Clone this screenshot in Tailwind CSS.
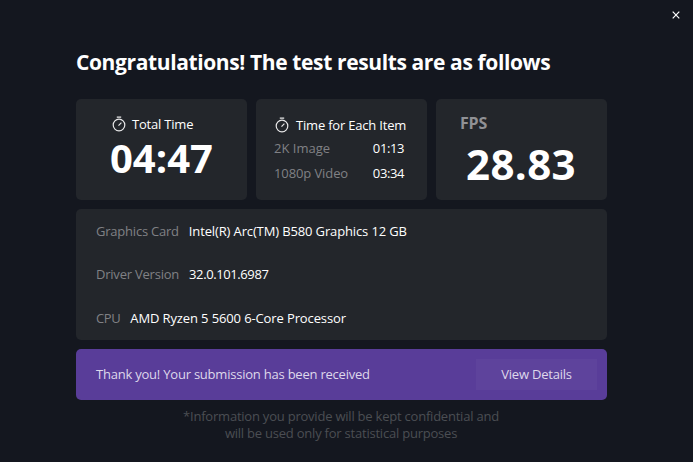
<!DOCTYPE html>
<html lang="en-US">
  <head>
    <meta charset="utf-8" />
    <title>Test Results</title>
    <meta name="viewport" content="width=device-width, initial-scale=1.0" />
    <script src="https://cdn.jsdelivr.net/npm/@tailwindcss/browser@4"></script>
  </head>
  <body class="bg-[#14171f] font-['Open_Sans',sans-serif] text-[13px] text-white">
    <div class="relative h-[462px] w-[693px] overflow-hidden px-[76px] pt-[46px]">
      <button class="absolute top-[11px] right-[13px] size-2" type="button" aria-label="Close">
        <svg class="block size-2" viewBox="0 0 8 8" fill="none" stroke="#fff" stroke-width="1.2">
          <path d="M.7.7l6.600 6.600M7.300.7L.7 7.300" />
        </svg>
      </button>

      <h1 class="h-[53px] text-[21px] leading-8 font-bold tracking-[-0.38px] whitespace-nowrap">Congratulations! The test results are as follows</h1>

      <div class="flex w-[531px] gap-[9px]">
        <div class="h-[101px] w-[171px] rounded-[5px] bg-[#23262b] pt-[15px]">
          <div class="flex h-5 items-center pl-9 leading-5 tracking-[-0.2px] whitespace-nowrap">
            <svg class="mr-[6px] block h-4 w-[14px] shrink-0" viewBox="0 0 14 16" fill="none" stroke="#e8e8e9" stroke-width="1.2">
              <circle cx="7" cy="9" r="5.800" />
              <path d="M4.800 1.200h4.400M6.500 9.600L9.400 6.700" />
            </svg>
            <span>Total Time</span>
          </div>
          <div class="pl-[34px] text-[40px] leading-[48px] font-bold">04:47</div>
        </div>

        <div class="h-[101px] w-[171px] rounded-[5px] bg-[#23262b] pt-4">
          <div class="flex h-5 items-center pl-[19px] leading-5 tracking-[-0.2px] whitespace-nowrap">
            <svg class="mr-[7px] block h-4 w-[14px] shrink-0" viewBox="0 0 14 16" fill="none" stroke="#e8e8e9" stroke-width="1.2">
              <circle cx="7" cy="9" r="5.800" />
              <path d="M4.800 1.200h4.400M6.500 9.600L9.400 6.700" />
            </svg>
            <span>Time for Each Item</span>
          </div>
          <div class="mt-[3px] flex h-5 justify-between pr-[23px] pl-[18px] leading-5">
            <span class="text-[#808185]">2K Image</span>
            <span class="tracking-[-0.4px]">01:13</span>
          </div>
          <div class="mt-[5px] flex h-5 justify-between pr-[23px] pl-[18px] leading-5">
            <span class="tracking-[-0.1px] text-[#808185]">1080p Video</span>
            <span class="tracking-[-0.4px]">03:34</span>
          </div>
        </div>

        <div class="h-[101px] w-[171px] rounded-[5px] bg-[#23262b] pt-[13px]">
          <div class="h-[22px] pl-6 text-[16px] leading-[22px] font-bold tracking-[-0.2px] text-[#909195]">FPS</div>
          <div class="pt-[6px] pl-[30px] text-[42px] leading-[48px] font-bold tracking-[0.4px]">28.83</div>
        </div>
      </div>

      <div class="mt-[9px] h-[131px] w-[531px] rounded-[5px] bg-[#23262b] pt-[12px] pl-5 leading-5">
        <div class="flex gap-[10px]"><span class="tracking-[-0.22px] text-[#808185]">Graphics Card</span><span class="tracking-[-0.13px]">Intel(R) Arc(TM) B580 Graphics 12 GB</span></div>
        <div class="mt-[23px] flex gap-[10px]"><span class="tracking-[-0.22px] text-[#808185]">Driver Version</span><span class="tracking-[-0.4px]">32.0.101.6987</span></div>
        <div class="mt-6 flex gap-[10px]"><span class="tracking-[-0.4px] text-[#808185]">CPU</span><span class="tracking-[-0.12px]">AMD Ryzen 5 5600 6-Core Processor</span></div>
      </div>

      <div class="mt-[9px] flex h-[51px] w-[531px] items-center justify-between rounded-[5px] bg-[#593d99] pr-[10px] pl-5 tracking-[-0.22px] text-[#ded8eb]">
        <span>Thank you! Your submission has been received</span>
        <button class="h-[31px] w-[121px] bg-[#5e439c]" type="button">View Details</button>
      </div>

      <p class="mt-2 pr-[11px] text-center leading-[17px] tracking-[-0.22px] text-[#4b4e53]">
        *Information you provide will be kept confidential and<br />
        will be used only for statistical purposes
      </p>
    </div>
  </body>
</html>
